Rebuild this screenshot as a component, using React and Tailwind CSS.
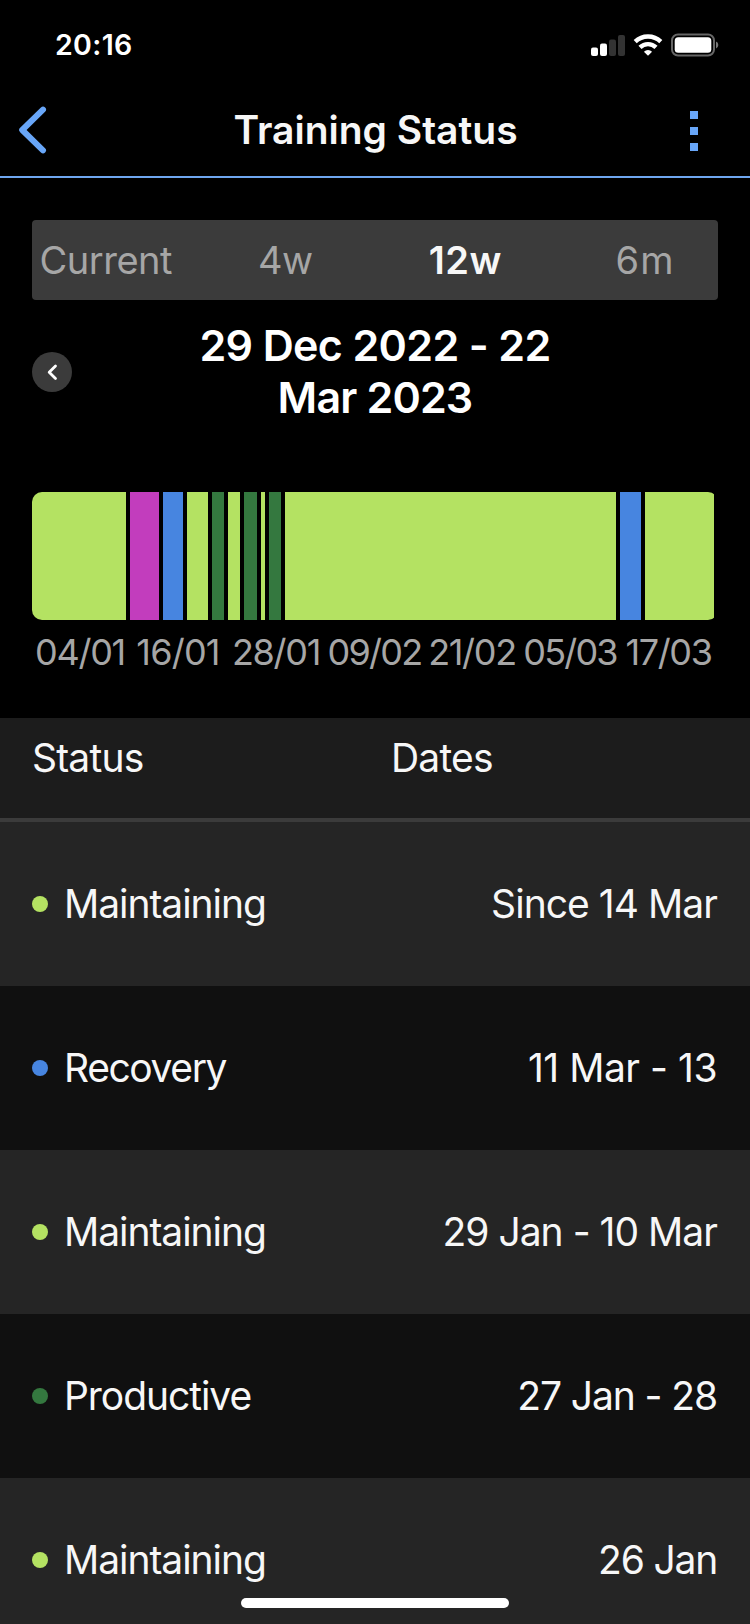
import React from "react";

const tabs = [
  { label: "Current", style: "text-[#a6a6a6] tracking-[-0.45px]" },
  { label: "4w", style: "text-[#a6a6a6] tracking-[-0.5px]" },
  { label: "12w", style: "pl-px font-semibold text-[#f7f7f7] tracking-[0.5px]" },
  { label: "6m", style: "pl-0.5 text-[#a6a6a6] tracking-[1.2px]" },
];

const GREEN = "bg-[#b4e262]";
const BLUE = "bg-[#4785e0]";
const FOREST = "bg-[#34783f]";

const segments = [
  { width: "w-[94px]", color: GREEN },
  { width: "w-[29px]", color: "bg-[#c23dbd]" },
  { width: "w-[20px]", color: BLUE },
  { width: "w-[21px]", color: GREEN },
  { width: "w-[12px]", color: FOREST },
  { width: "w-[12px]", color: GREEN },
  { width: "w-[13px]", color: FOREST },
  { width: "w-[4px]", color: GREEN },
  { width: "w-[12px]", color: FOREST },
  { width: "w-[331px]", color: GREEN },
  { width: "w-[21px]", color: BLUE },
  { width: "w-[69px]", color: GREEN },
];

const ticks = [
  { label: "04/01", style: "tracking-[-1.3px]" },
  { label: "16/01", style: "tracking-[-0.8px]" },
  { label: "28/01", style: "tracking-[-1.3px]" },
  { label: "09/02", style: "pl-px tracking-[-1.7px]" },
  { label: "21/02", style: "tracking-[-1.3px]" },
  { label: "05/03", style: "tracking-[-1.8px]" },
  { label: "17/03", style: "pl-px tracking-[-1.4px]" },
];

const rows = [
  { status: "Maintaining", name: "tracking-[-1.05px]", dates: "Since 14 Mar", dot: GREEN, tracking: "tracking-[-0.95px]" },
  { status: "Recovery", name: "tracking-[-1.4px]", dates: "11 Mar - 13", dot: BLUE, tracking: "tracking-[-0.48px]" },
  { status: "Maintaining", name: "tracking-[-1.05px]", dates: "29 Jan - 10 Mar", dot: GREEN, tracking: "tracking-[-0.98px]" },
  { status: "Productive", name: "tracking-[-1.05px]", dates: "27 Jan - 28", dot: FOREST, tracking: "tracking-[-1.1px]" },
  { status: "Maintaining", name: "tracking-[-1.05px]", dates: "26 Jan", dot: GREEN, tracking: "tracking-[-1.2px]" },
];

function StatusBar() {
  return (
    <div className="flex h-[88px] shrink-0 items-center justify-between pt-px pr-[31px] pl-[55px]">
      <span className="pt-0.5 text-[28.5px] font-semibold tracking-[0.35px]">20:16</span>
      <svg width="130" height="24" viewBox="0 0 130 24" className="shrink-0">
        <g fill="#fff">
          <rect x="2" y="14.5" width="7" height="8.5" rx="2" />
          <rect x="11" y="10.5" width="7" height="12.5" rx="2" />
          <rect x="20" y="6.5" width="7" height="16.5" rx="2" fill="#333" />
          <rect x="29" y="2" width="7" height="21" rx="2" fill="#333" />
        </g>
        <g fill="none" stroke="#fff" strokeWidth="4.4">
          <path d="M46.2 8.7a18.5 18.5 0 0 1 25.6 0" />
          <path d="M51 14.4a11.5 11.5 0 0 1 16 0" />
        </g>
        <path d="M54.9 18.7a6 6 0 0 1 8.2 0L59 22.8z" fill="#fff" />
        <rect x="83" y="1.5" width="42" height="21" rx="6" fill="none" stroke="#666" strokeWidth="2" />
        <rect x="85.7" y="4.2" width="36.6" height="15.6" rx="3.5" fill="#fff" />
        <path d="M127 8.5a3.8 3.8 0 0 1 0 7z" fill="#777" />
      </svg>
    </div>
  );
}

function Header() {
  return (
    <header className="grid h-[90px] shrink-0 grid-cols-[60px_1fr_60px] items-center border-b-2 border-[#6ea6ef] pb-1">
      <svg width="28" height="48" viewBox="0 0 28 48" className="ml-[19px]" fill="none" stroke="#68a6f8" strokeWidth="6" strokeLinecap="round" strokeLinejoin="round">
        <path d="M24 3.7 3.2 24 24 44.3" />
      </svg>
      <h1 className="pl-px text-center text-[39px] font-semibold text-[#f7f7f7]">Training Status</h1>
      <div className="flex flex-col gap-2 pt-0.5">
        <span className="size-2 bg-[#68a6f8]" />
        <span className="size-2 bg-[#68a6f8]" />
        <span className="size-2 bg-[#68a6f8]" />
      </div>
    </header>
  );
}

export default function App() {
  return (
    <div className="flex h-[1624px] w-[750px] flex-col overflow-hidden bg-black font-['Inter',sans-serif] text-white">
      <StatusBar />
      <Header />

      <section className="flex h-[540px] shrink-0 flex-col px-8 pt-[42px]">
        <div className="h-20 shrink-0 rounded bg-[#3b3b3b]">
          <div className="-mx-4 grid h-20 grid-cols-4 items-center text-center text-[38px]">
            {tabs.map((t) => (
              <span key={t.label} className={t.style}>{t.label}</span>
            ))}
          </div>
        </div>

        <div className="mt-5 flex h-[104px] shrink-0 items-center justify-between pr-10">
          <button className="flex size-10 items-center justify-center rounded-full bg-[#3b3b3b]">
            <svg width="12" height="18" viewBox="0 0 12 18" fill="none" stroke="#fff" strokeWidth="2.8" strokeLinecap="round" strokeLinejoin="round">
              <path d="M9.5 3 3.2 9.2l6.3 6.3" />
            </svg>
          </button>
          <h2 className="-mt-[3px] text-center text-[43px] leading-[52px] font-semibold">
            <span className="block tracking-[-0.65px]">29 Dec 2022 - 22</span>
            <span className="block tracking-[-0.85px]">Mar 2023</span>
          </h2>
          <span />
        </div>

        <div className="mt-[68px] flex h-32 shrink-0 gap-1 overflow-hidden rounded-[10px]">
          {segments.map((s, i) => (
            <div key={i} className={`shrink-0 ${s.width} ${s.color}`} />
          ))}
        </div>
        <div className="mt-2 -ml-px flex shrink-0 text-center text-[36px] leading-[48px] text-[#a6a6a6]">
          {ticks.map((t) => (
            <span key={t.label} className={`w-[98px] shrink-0 whitespace-nowrap ${t.style}`}>{t.label}</span>
          ))}
        </div>
      </section>

      <div className="grid h-[104px] shrink-0 grid-cols-[359px_1fr] border-b-4 border-[#3b3b3b] bg-[#1c1c1c] pl-8 text-[39px] leading-[80px] tracking-[-0.8px] text-[#f7f7f7]">
        <span>Status</span>
        <span>Dates</span>
      </div>

      <div className="shrink-0">
        {rows.map((r, i) => (
          <div
            key={i}
            className="flex h-[164px] items-center justify-between pr-[33px] pl-8 text-[39px] text-[#f7f7f7] odd:bg-[#252525] even:bg-[#101010]"
          >
            <div className="flex items-center gap-4">
              <span className={`size-4 rounded-full ${r.dot}`} />
              <span className={r.name}>{r.status}</span>
            </div>
            <span className={r.tracking}>{r.dates}</span>
          </div>
        ))}
      </div>

      <div className="fixed top-[1598px] left-[241px] h-2.5 w-[268px] rounded-full bg-white" />
    </div>
  );
}
